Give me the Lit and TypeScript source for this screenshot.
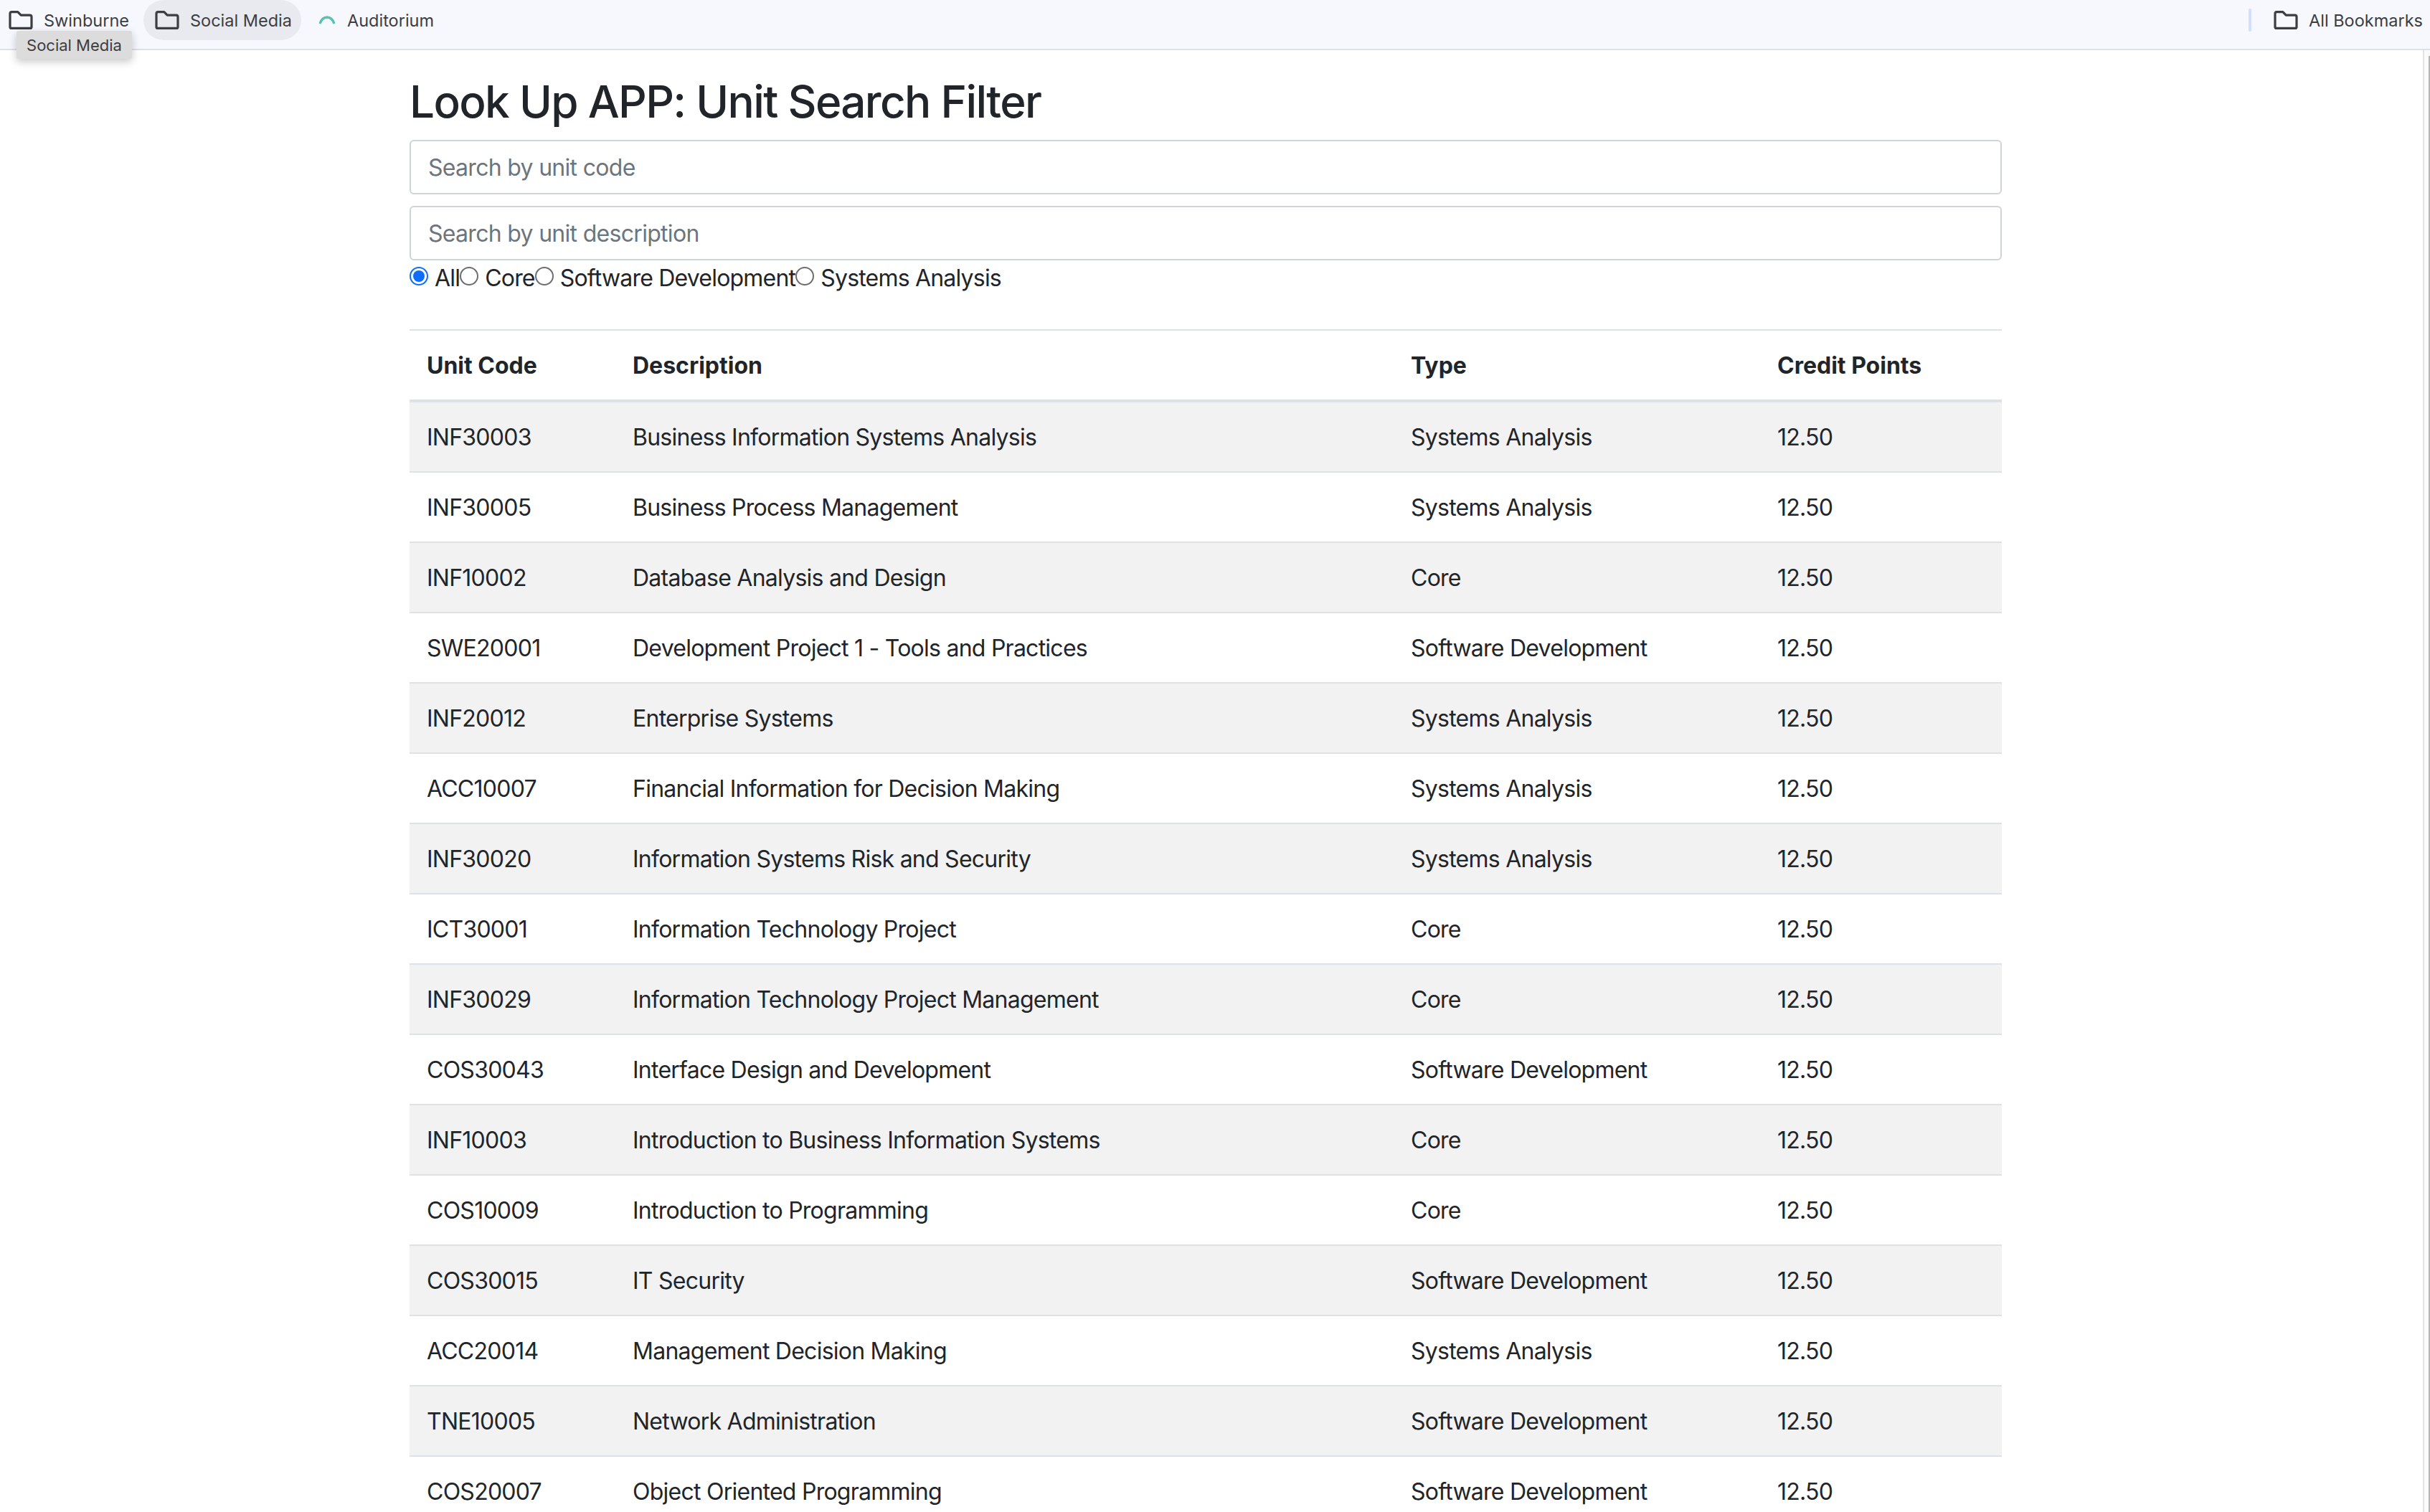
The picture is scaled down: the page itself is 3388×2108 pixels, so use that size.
import { LitElement, html, css, svg } from 'lit';
import { customElement } from 'lit/decorators.js';

const ROWS = [
  ['INF30003', 'Business Information Systems Analysis', 'Systems Analysis'],
  ['INF30005', 'Business Process Management', 'Systems Analysis'],
  ['INF10002', 'Database Analysis and Design', 'Core'],
  ['SWE20001', 'Development Project 1 - Tools and Practices', 'Software Development'],
  ['INF20012', 'Enterprise Systems', 'Systems Analysis'],
  ['ACC10007', 'Financial Information for Decision Making', 'Systems Analysis'],
  ['INF30020', 'Information Systems Risk and Security', 'Systems Analysis'],
  ['ICT30001', 'Information Technology Project', 'Core'],
  ['INF30029', 'Information Technology Project Management', 'Core'],
  ['COS30043', 'Interface Design and Development', 'Software Development'],
  ['INF10003', 'Introduction to Business Information Systems', 'Core'],
  ['COS10009', 'Introduction to Programming', 'Core'],
  ['COS30015', 'IT Security', 'Software Development'],
  ['ACC20014', 'Management Decision Making', 'Systems Analysis'],
  ['TNE10005', 'Network Administration', 'Software Development'],
  ['COS20007', 'Object Oriented Programming', 'Software Development'],
];

const FILTERS = ['All', 'Core', 'Software Development', 'Systems Analysis'];

const folder = svg`<svg class="icon" width="34" height="26" viewBox="0 0 34 26" fill="none" stroke="#3c3d42" stroke-width="3.2" stroke-linejoin="round"><path d="M2 4a2.4 2.4 0 0 1 2.4-2.4h8.4l4.4 4.6h12.4A2.4 2.4 0 0 1 32 8.6v13.8a2 2 0 0 1-2 2H4a2 2 0 0 1-2-2z"/></svg>`;

const arc = svg`<svg class="icon" width="24" height="12" viewBox="0 0 24 12" fill="none"><path d="M2 11C4 5 8 2 12 2s8 3 10 9" stroke="#57c2b0" stroke-width="3.4"/></svg>`;

@customElement('app-root')
export class AppRoot extends LitElement {
  static styles = css`
    :host {
      display: block;
      position: relative;
      height: 2108px;
      overflow: hidden;
      background: #fff;
      font-family: Inter, 'Liberation Sans', sans-serif;
      color: #212529;
    }
    .bar {
      display: flex;
      align-items: center;
      height: 68px;
      border-bottom: 2px solid #dfdfea;
      background: #f7f8fd;
      padding: 0 10px 0 12px;
      font-size: 23.5px;
      color: #3c3d42;
    }
    .mark {
      display: flex;
      align-items: center;
      gap: 15px;
      height: 56px;
      margin-top: -12px;
      white-space: nowrap;
    }
    .mark.hover {
      background: #e9eaef;
      border-radius: 28px;
      padding: 0 13px 0 16px;
      margin: -12px 10px 0 20px;
    }
    .mark.arc {
      gap: 16px;
      margin-left: 14px;
    }
    .spacer {
      flex: 1;
    }
    .sep {
      width: 4px;
      height: 32px;
      margin: -12px 31px 0 0;
      border-radius: 2px;
      background: #d3e0fb;
    }
    .tip {
      position: absolute;
      left: 23px;
      top: 43px;
      width: 161px;
      height: 39px;
      display: flex;
      align-items: center;
      justify-content: center;
      box-sizing: border-box;
      background: #dcdcdc;
      border-radius: 3px;
      box-shadow: 0 4px 12px rgba(0, 0, 0, 0.22);
      font-size: 22px;
      color: #3c3d42;
    }
    .scroll {
      position: absolute;
      top: 70px;
      right: 0;
      bottom: 0;
      width: 10px;
      box-sizing: border-box;
      border-left: 2px solid #e2e2e2;
      background: #fafafa;
    }
    .thumb {
      position: absolute;
      top: 8px;
      right: 0;
      bottom: 0;
      width: 2px;
      background: #b4b4b4;
    }
    main {
      width: 2220px;
      margin-left: 571px;
    }
    h1 {
      margin: 0;
      padding-top: 34px;
      font-size: 62px;
      line-height: 76.8px;
      font-weight: 500;
      letter-spacing: -1.65px;
      height: 91px;
    }
    input.text {
      display: block;
      box-sizing: border-box;
      width: 100%;
      height: 76px;
      margin: 0 0 16px;
      padding: 12px 24px;
      border: 2px solid #ced4da;
      border-radius: 6px;
      outline: none;
      font: inherit;
      font-size: 32px;
      letter-spacing: -0.7px;
      color: #212529;
    }
    input.text::placeholder {
      color: #6c757d;
    }
    .filters {
      display: flex;
      align-items: center;
      height: 48px;
      margin-top: -16px;
      font-size: 32px;
      letter-spacing: -0.8px;
    }
    .filters label {
      display: flex;
      align-items: center;
      gap: 9px;
    }
    .radio {
      box-sizing: border-box;
      width: 26px;
      height: 26px;
      margin-top: -4px;
      border: 2px solid #6e6e6e;
      border-radius: 50%;
      background: #fff;
    }
    .radio.on {
      border: 2.5px solid #0d6efd;
      padding: 3px;
      background: #0d6efd content-box;
    }
    table {
      width: 100%;
      margin-top: 48px;
      border-collapse: collapse;
      table-layout: fixed;
      font-size: 32px;
      line-height: 48px;
      letter-spacing: -0.75px;
    }
    th,
    td {
      padding: 25px 24px 23px;
      text-align: left;
      border-bottom: 2px solid #dee2e6;
    }
    thead tr {
      border-top: 2px solid #dee2e6;
    }
    th {
      box-sizing: border-box;
      font-weight: 700;
      letter-spacing: 0;
      border-bottom-width: 4px;
    }
    tbody tr:nth-child(odd) {
      background: #f2f2f2;
    }
    th:nth-child(1) {
      width: 287px;
    }
    th:nth-child(2) {
      width: 1085px;
    }
    th:nth-child(3) {
      width: 511px;
    }
  `;

  render() {
    return html`
      <div class="bar">
        <div class="mark">${folder}<span>Swinburne</span></div>
        <div class="mark hover">${folder}<span>Social Media</span></div>
        <div class="mark arc">${arc}<span>Auditorium</span></div>
        <div class="spacer"></div>
        <div class="sep"></div>
        <div class="mark">${folder}<span>All Bookmarks</span></div>
      </div>
      <div class="tip">Social Media</div>
      <div class="scroll"><div class="thumb"></div></div>
      <main>
        <h1>Look Up APP: Unit Search Filter</h1>
        <input class="text" placeholder="Search by unit code" />
        <input class="text" placeholder="Search by unit description" />
        <div class="filters">
          ${FILTERS.map(
            (f, i) => html`<label><span class="radio ${i === 0 ? 'on' : ''}"></span>${f}</label>`
          )}
        </div>
        <table>
          <thead>
            <tr>
              <th>Unit Code</th>
              <th>Description</th>
              <th>Type</th>
              <th>Credit Points</th>
            </tr>
          </thead>
          <tbody>
            ${ROWS.map(
              (r) => html`<tr>
                <td>${r[0]}</td>
                <td>${r[1]}</td>
                <td>${r[2]}</td>
                <td>12.50</td>
              </tr>`
            )}
          </tbody>
        </table>
      </main>
    `;
  }
}
